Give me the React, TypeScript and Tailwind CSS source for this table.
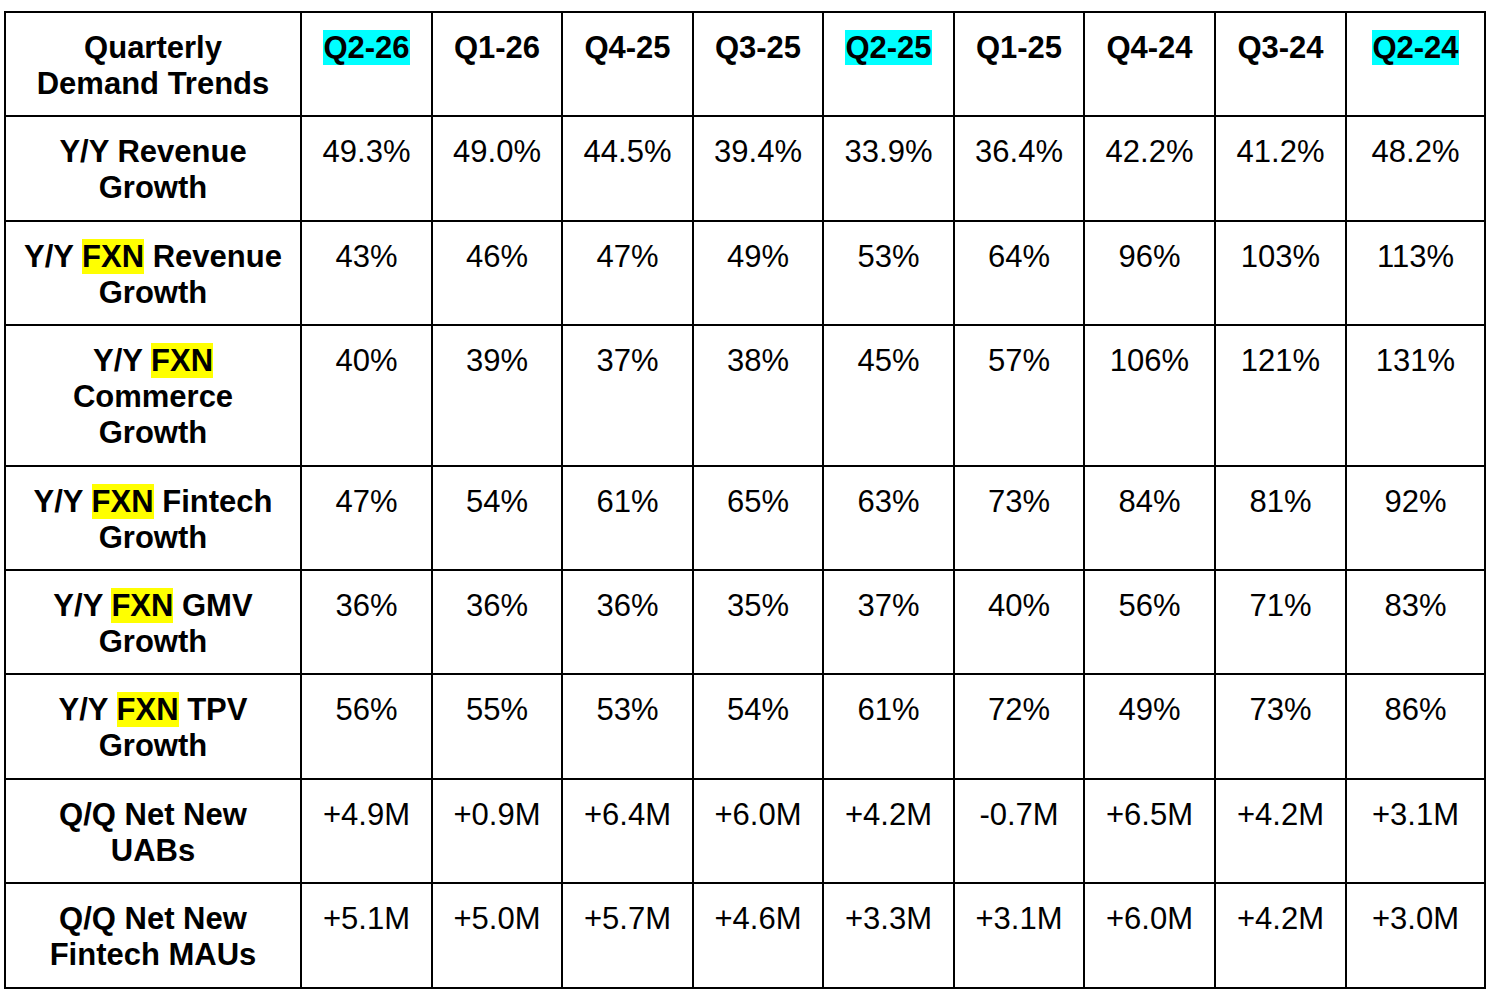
import React from "react";

type Row = {
  label: React.ReactNode;
  values: string[];
};

const quarters = ["Q2-26", "Q1-26", "Q4-25", "Q3-25", "Q2-25", "Q1-25", "Q4-24", "Q3-24", "Q2-24"];
const highlighted = new Set(["Q2-26", "Q2-25", "Q2-24"]);

const Fxn = () => <span className="bg-[#ffff00]">FXN</span>;

const rows: Row[] = [
  {
    label: (
      <>
        Y/Y Revenue
        <br />
        Growth
      </>
    ),
    values: ["49.3%", "49.0%", "44.5%", "39.4%", "33.9%", "36.4%", "42.2%", "41.2%", "48.2%"],
  },
  {
    label: (
      <>
        Y/Y <Fxn /> Revenue
        <br />
        Growth
      </>
    ),
    values: ["43%", "46%", "47%", "49%", "53%", "64%", "96%", "103%", "113%"],
  },
  {
    label: (
      <>
        Y/Y <Fxn />
        <br />
        Commerce
        <br />
        Growth
      </>
    ),
    values: ["40%", "39%", "37%", "38%", "45%", "57%", "106%", "121%", "131%"],
  },
  {
    label: (
      <>
        Y/Y <Fxn /> Fintech
        <br />
        Growth
      </>
    ),
    values: ["47%", "54%", "61%", "65%", "63%", "73%", "84%", "81%", "92%"],
  },
  {
    label: (
      <>
        Y/Y <Fxn /> GMV
        <br />
        Growth
      </>
    ),
    values: ["36%", "36%", "36%", "35%", "37%", "40%", "56%", "71%", "83%"],
  },
  {
    label: (
      <>
        Y/Y <Fxn /> TPV
        <br />
        Growth
      </>
    ),
    values: ["56%", "55%", "53%", "54%", "61%", "72%", "49%", "73%", "86%"],
  },
  {
    label: (
      <>
        Q/Q Net New
        <br />
        UABs
      </>
    ),
    values: ["+4.9M", "+0.9M", "+6.4M", "+6.0M", "+4.2M", "-0.7M", "+6.5M", "+4.2M", "+3.1M"],
  },
  {
    label: (
      <>
        Q/Q Net New
        <br />
        Fintech MAUs
      </>
    ),
    values: ["+5.1M", "+5.0M", "+5.7M", "+4.6M", "+3.3M", "+3.1M", "+6.0M", "+4.2M", "+3.0M"],
  },
];

const colWidths = ["w-[296px]", "w-[131px]", "w-[130px]", "w-[131px]", "w-[130px]", "w-[131px]", "w-[130px]", "w-[131px]", "w-[131px]", "w-[139px]"];

export default function App() {
  return (
    <div className="min-h-screen bg-white pl-[4px] pt-[11px] font-['Liberation_Sans',Arial,sans-serif] text-black">
      <table className="w-[1480px] table-fixed border-collapse border-2 border-black text-[31px] leading-[36px]">
        <colgroup>
          {colWidths.map((w, i) => (
            <col key={i} className={w} />
          ))}
        </colgroup>
        <thead>
          <tr>
            <th className="border-2 border-black px-1 pt-[17px] pb-[13.4px] align-top font-bold">
              Quarterly
              <br />
              Demand Trends
            </th>
            {quarters.map((q) => (
              <th key={q} className="border-2 border-black px-1 pt-[17px] pb-[13.4px] align-top font-bold">
                <span className={highlighted.has(q) ? "bg-[#00ffff]" : ""}>{q}</span>
              </th>
            ))}
          </tr>
        </thead>
        <tbody>
          {rows.map((row, r) => (
            <tr key={r}>
              <td className="border-2 border-black px-1 pt-[17px] pb-[13.4px] text-center align-top font-bold">{row.label}</td>
              {row.values.map((v, i) => (
                <td key={i} className="border-2 border-black px-1 pt-[17px] pb-[13.4px] text-center align-top">
                  {v}
                </td>
              ))}
            </tr>
          ))}
        </tbody>
      </table>
    </div>
  );
}
